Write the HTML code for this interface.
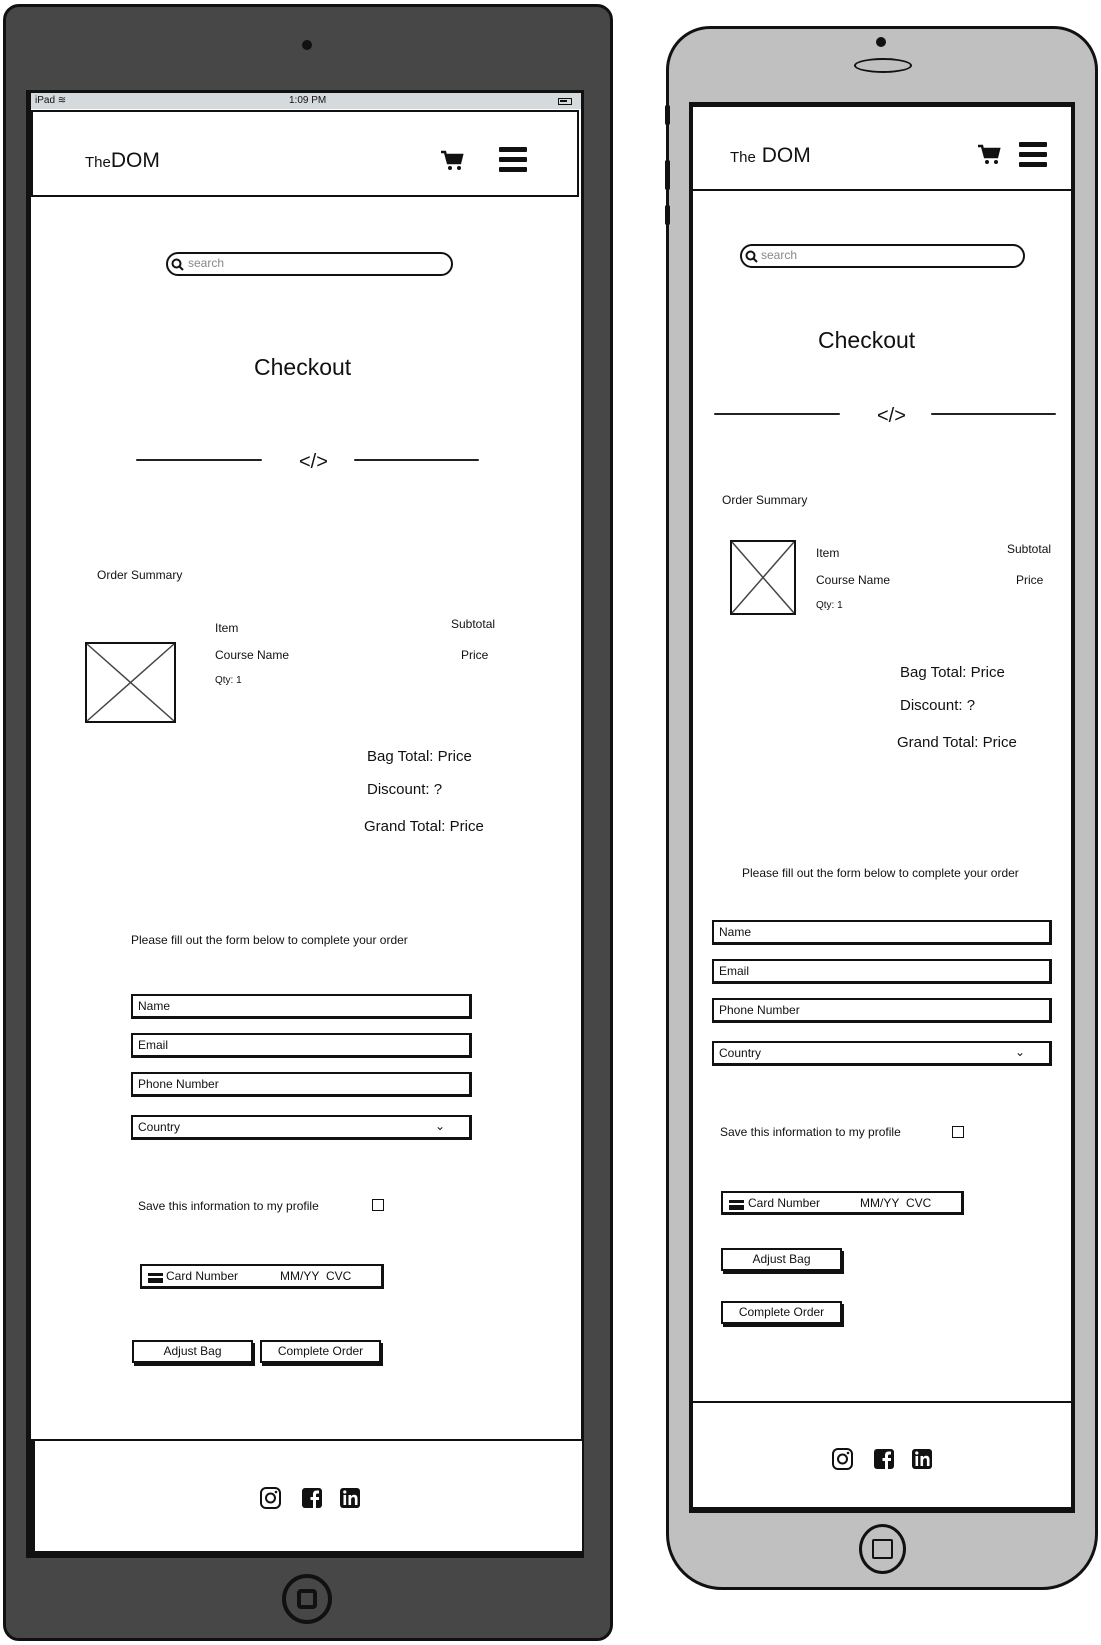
<!DOCTYPE html>
<html><head><meta charset="utf-8"><style>
*{margin:0;padding:0;box-sizing:border-box}
body{width:1101px;height:1645px;background:#fff;position:relative;overflow:hidden;font-family:"Liberation Sans",sans-serif;color:#111}
.a{position:absolute}
.t{position:absolute;white-space:nowrap;line-height:1}
.box{position:absolute;border:2px solid #111;background:#fff}
.inp{position:absolute;border:2px solid #111;border-width:2px 3px 3px 2px;background:#fff;font-size:12px;padding:4px 5px;line-height:1}
.btn{position:absolute;border:2px solid #111;background:#fff;box-shadow:2px 3px 0 #111;font-size:12px;text-align:center;line-height:19px}
.line{position:absolute;height:2px;background:#222;border-radius:1px}
</style></head><body>

<!-- iPad -->
<div class="a" style="left:3px;top:4px;width:610px;height:1637px;background:#474747;border:3px solid #111;border-radius:16px"></div>
<div class="a" style="left:302px;top:40px;width:10px;height:10px;border-radius:50%;background:#111"></div>
<div class="a" style="left:26px;top:90px;width:558px;height:1468px;background:#111"></div>
<div class="a" style="left:31px;top:93px;width:550px;height:16px;background:#d5dadd"></div>
<div class="t" style="left:35px;top:96px;font-size:10px">iPad ≋</div>
<div class="t" style="left:289px;top:96px;font-size:10px">1:09 PM</div>
<div class="a" style="left:558px;top:98px;width:14px;height:7px;border:1.5px solid #111;padding:1px"><div style="width:7px;height:2px;background:#111"></div></div>
<div class="a" style="left:31px;top:109px;width:550px;height:1330px;background:#fff"></div>
<div class="a" style="left:31px;top:110px;width:548px;height:87px;border:2px solid #111;background:#fff"></div>
<div class="t" style="left:85px;top:150px;font-size:15px">The<span style="font-size:21px">DOM</span></div>
<svg class="a" style="left:440px;top:150px" width="24" height="22" viewBox="0 0 24 22"><path d="M1 2h4l3 11h12l2-8H7" fill="none" stroke="#111" stroke-width="2.5"/><path d="M7 5h15l-2 8H9z" fill="#111"/><circle cx="10" cy="18" r="2" fill="#111"/><circle cx="19" cy="18" r="2" fill="#111"/></svg>
<div class="a" style="left:499px;top:147px;width:28px;height:5px;background:#111;border-radius:1px"></div>
<div class="a" style="left:499px;top:157px;width:28px;height:5px;background:#111;border-radius:1px"></div>
<div class="a" style="left:499px;top:167px;width:28px;height:5px;background:#111;border-radius:1px"></div>
<div class="a" style="left:166px;top:252px;width:287px;height:24px;border:2px solid #111;border-radius:12px"></div>
<svg class="a" style="left:171px;top:258px" width="13" height="13"><circle cx="5.5" cy="5.5" r="4" fill="none" stroke="#111" stroke-width="2"/><path d="M8.5 8.5l3.5 3.5" stroke="#111" stroke-width="2"/></svg>
<div class="t" style="left:188px;top:257px;font-size:12px;color:#888">search</div>
<div class="t" style="left:254px;top:356px;font-size:23px">Checkout</div>
<div class="line" style="left:136px;top:459px;width:126px"></div>
<div class="line" style="left:354px;top:459px;width:125px"></div>
<div class="t" style="left:299px;top:452px;font-size:20px">&lt;/&gt;</div>
<div class="t" style="left:97px;top:569px;font-size:12px">Order Summary</div>
<svg class="a" style="left:85px;top:642px" width="92" height="82"><rect x="1" y="1" width="89" height="79" fill="#fff" stroke="#111" stroke-width="2"/><path d="M2 2L89 79M89 2L2 79" stroke="#444" stroke-width="1.5"/></svg>
<div class="t" style="left:215px;top:622px;font-size:12px">Item</div>
<div class="t" style="left:215px;top:649px;font-size:12px">Course Name</div>
<div class="t" style="left:215px;top:676px;font-size:10px">Qty: 1</div>
<div class="t" style="left:451px;top:618px;font-size:12px">Subtotal</div>
<div class="t" style="left:461px;top:649px;font-size:12px">Price</div>
<div class="t" style="left:367px;top:749px;font-size:15px">Bag Total: Price</div>
<div class="t" style="left:367px;top:782px;font-size:15px">Discount: ?</div>
<div class="t" style="left:364px;top:819px;font-size:15px">Grand Total: Price</div>
<div class="t" style="left:131px;top:934px;font-size:12px">Please fill out the form below to complete your order</div>
<div class="inp" style="left:131px;top:994px;width:341px;height:25px">Name</div>
<div class="inp" style="left:131px;top:1033px;width:341px;height:25px">Email</div>
<div class="inp" style="left:131px;top:1072px;width:341px;height:25px">Phone Number</div>
<div class="inp" style="left:131px;top:1115px;width:341px;height:25px">Country<span style="position:absolute;right:24px;top:3px">⌄</span></div>
<div class="t" style="left:138px;top:1200px;font-size:12px">Save this information to my profile</div>
<div class="box" style="left:372px;top:1199px;width:12px;height:12px;border-width:1.5px"></div>
<div class="inp" style="left:140px;top:1264px;width:244px;height:25px;font-size:12px;padding-left:24px">Card Number<span style="position:absolute;left:138px;top:4px">MM/YY&nbsp; CVC</span><span style="position:absolute;left:6px;top:7px;width:15px;height:10px;background:#111;border-top:3px solid #111"><span style="display:block;height:2px;background:#fff;margin-top:0"></span></span></div>
<div class="btn" style="left:132px;top:1340px;width:121px;height:23px">Adjust Bag</div>
<div class="btn" style="left:260px;top:1340px;width:121px;height:23px">Complete Order</div>
<div class="a" style="left:33px;top:1439px;width:549px;height:2px;background:#111"></div>
<div class="a" style="left:35px;top:1441px;width:547px;height:110px;background:#fff"></div>

<!-- footer icons ipad -->
<svg class="a" style="left:260px;top:1487px" width="104" height="22" viewBox="0 0 104 22">
<rect x="1" y="1" width="19" height="20" rx="5" fill="none" stroke="#111" stroke-width="2"/><circle cx="10.5" cy="11" r="4.5" fill="none" stroke="#111" stroke-width="2"/><circle cx="16" cy="5" r="1.3" fill="#111"/>
<rect x="42" y="1" width="20" height="20" rx="3" fill="#111"/><path d="M56 21v-8h3v-3h-3V8c0-1 .5-1.5 1.5-1.5H59V3.5h-2.5C54 3.5 53 5 53 7.5V10h-2.5v3H53v8z" fill="#fff"/>
<rect x="80" y="1" width="20" height="20" rx="3" fill="#111"/><rect x="83.5" y="8" width="2.6" height="10" fill="#fff"/><circle cx="84.8" cy="5" r="1.6" fill="#fff"/><path d="M88.5 8h2.5v1.4c.8-1.2 2-1.6 3.2-1.6 2 0 3.3 1.2 3.3 3.8V18h-2.6v-5.8c0-1.3-.5-2.1-1.6-2.1s-2.2.8-2.2 2.2V18h-2.6z" fill="#fff"/>
</svg>
<div class="a" style="left:282px;top:1574px;width:50px;height:50px;border:4px solid #111;border-radius:50%"></div>
<div class="a" style="left:297px;top:1589px;width:20px;height:20px;border:4px solid #111;border-radius:4px"></div>

<!-- Phone -->
<div class="a" style="left:666px;top:26px;width:432px;height:1564px;background:#c0c0c0;border:3px solid #111;border-radius:44px 44px 56px 56px"></div>
<div class="a" style="left:876px;top:37px;width:10px;height:10px;border-radius:50%;background:#111"></div>
<div class="a" style="left:854px;top:58px;width:58px;height:15px;border:2.5px solid #111;border-radius:50%"></div>
<div class="a" style="left:665px;top:105px;width:5px;height:20px;background:#111;border-radius:2px"></div>
<div class="a" style="left:665px;top:160px;width:5px;height:30px;background:#111;border-radius:2px"></div>
<div class="a" style="left:665px;top:205px;width:5px;height:20px;background:#111;border-radius:2px"></div>
<div class="a" style="left:689px;top:102px;width:386px;height:1411px;background:#111"></div>
<div class="a" style="left:693px;top:107px;width:378px;height:1400px;background:#fff"></div>
<div class="a" style="left:693px;top:189px;width:378px;height:2px;background:#111"></div>
<div class="t" style="left:730px;top:145px;font-size:15px">The<span style="font-size:21px">&nbsp;DOM</span></div>
<svg class="a" style="left:977px;top:144px" width="24" height="22" viewBox="0 0 24 22"><path d="M1 2h4l3 11h12l2-8H7" fill="none" stroke="#111" stroke-width="2.5"/><path d="M7 5h15l-2 8H9z" fill="#111"/><circle cx="10" cy="18" r="2" fill="#111"/><circle cx="19" cy="18" r="2" fill="#111"/></svg>
<div class="a" style="left:1019px;top:142px;width:28px;height:5px;background:#111;border-radius:1px"></div>
<div class="a" style="left:1019px;top:152px;width:28px;height:5px;background:#111;border-radius:1px"></div>
<div class="a" style="left:1019px;top:162px;width:28px;height:5px;background:#111;border-radius:1px"></div>
<div class="a" style="left:740px;top:244px;width:285px;height:24px;border:2px solid #111;border-radius:12px"></div>
<svg class="a" style="left:745px;top:250px" width="13" height="13"><circle cx="5.5" cy="5.5" r="4" fill="none" stroke="#111" stroke-width="2"/><path d="M8.5 8.5l3.5 3.5" stroke="#111" stroke-width="2"/></svg>
<div class="t" style="left:761px;top:249px;font-size:12px;color:#888">search</div>
<div class="t" style="left:818px;top:329px;font-size:23px">Checkout</div>
<div class="line" style="left:714px;top:413px;width:126px"></div>
<div class="line" style="left:931px;top:413px;width:125px"></div>
<div class="t" style="left:877px;top:406px;font-size:20px">&lt;/&gt;</div>
<div class="t" style="left:722px;top:494px;font-size:12px">Order Summary</div>
<svg class="a" style="left:730px;top:540px" width="67" height="76"><rect x="1" y="1" width="64" height="73" fill="#fff" stroke="#111" stroke-width="2"/><path d="M2 2L64 73M64 2L2 73" stroke="#444" stroke-width="1.5"/></svg>
<div class="t" style="left:816px;top:547px;font-size:12px">Item</div>
<div class="t" style="left:816px;top:574px;font-size:12px">Course Name</div>
<div class="t" style="left:816px;top:601px;font-size:10px">Qty: 1</div>
<div class="t" style="left:1007px;top:543px;font-size:12px">Subtotal</div>
<div class="t" style="left:1016px;top:574px;font-size:12px">Price</div>
<div class="t" style="left:900px;top:665px;font-size:15px">Bag Total: Price</div>
<div class="t" style="left:900px;top:698px;font-size:15px">Discount: ?</div>
<div class="t" style="left:897px;top:735px;font-size:15px">Grand Total: Price</div>
<div class="t" style="left:742px;top:867px;font-size:12px">Please fill out the form below to complete your order</div>
<div class="inp" style="left:712px;top:920px;width:340px;height:25px">Name</div>
<div class="inp" style="left:712px;top:959px;width:340px;height:25px">Email</div>
<div class="inp" style="left:712px;top:998px;width:340px;height:25px">Phone Number</div>
<div class="inp" style="left:712px;top:1041px;width:340px;height:25px">Country<span style="position:absolute;right:24px;top:3px">⌄</span></div>
<div class="t" style="left:720px;top:1126px;font-size:12px">Save this information to my profile</div>
<div class="box" style="left:952px;top:1126px;width:12px;height:12px;border-width:1.5px"></div>
<div class="inp" style="left:721px;top:1191px;width:243px;height:24px;padding-left:25px">Card Number<span style="position:absolute;left:137px;top:4px">MM/YY&nbsp; CVC</span><span style="position:absolute;left:6px;top:7px;width:15px;height:10px;background:#111;border-top:3px solid #111"><span style="display:block;height:2px;background:#fff"></span></span></div>
<div class="btn" style="left:721px;top:1248px;width:121px;height:23px">Adjust Bag</div>
<div class="btn" style="left:721px;top:1301px;width:121px;height:23px">Complete Order</div>
<div class="a" style="left:693px;top:1401px;width:378px;height:2px;background:#111"></div>
<svg class="a" style="left:832px;top:1448px" width="104" height="22" viewBox="0 0 104 22">
<rect x="1" y="1" width="19" height="20" rx="5" fill="none" stroke="#111" stroke-width="2"/><circle cx="10.5" cy="11" r="4.5" fill="none" stroke="#111" stroke-width="2"/><circle cx="16" cy="5" r="1.3" fill="#111"/>
<rect x="42" y="1" width="20" height="20" rx="3" fill="#111"/><path d="M56 21v-8h3v-3h-3V8c0-1 .5-1.5 1.5-1.5H59V3.5h-2.5C54 3.5 53 5 53 7.5V10h-2.5v3H53v8z" fill="#fff"/>
<rect x="80" y="1" width="20" height="20" rx="3" fill="#111"/><rect x="83.5" y="8" width="2.6" height="10" fill="#fff"/><circle cx="84.8" cy="5" r="1.6" fill="#fff"/><path d="M88.5 8h2.5v1.4c.8-1.2 2-1.6 3.2-1.6 2 0 3.3 1.2 3.3 3.8V18h-2.6v-5.8c0-1.3-.5-2.1-1.6-2.1s-2.2.8-2.2 2.2V18h-2.6z" fill="#fff"/>
</svg>
<div class="a" style="left:859px;top:1524px;width:47px;height:50px;border:3px solid #111;border-radius:50%"></div>
<div class="a" style="left:872px;top:1539px;width:21px;height:20px;border:2px solid #111;border-radius:2px"></div>
</body></html>
